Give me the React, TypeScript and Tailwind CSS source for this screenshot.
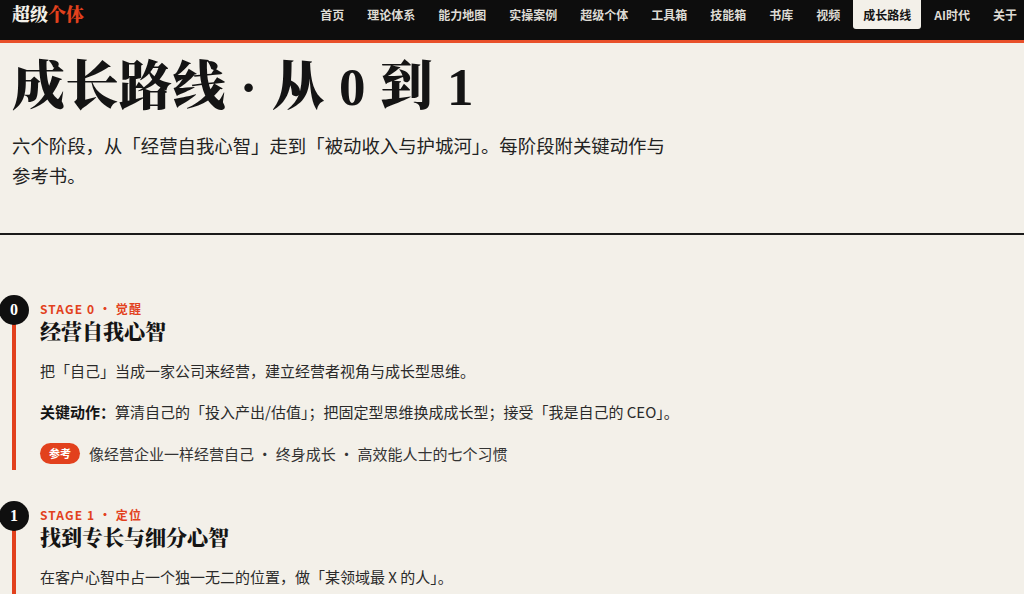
import React from 'react';

const NAV = ['首页', '理论体系', '能力地图', '实操案例', '超级个体', '工具箱', '技能箱', '书库', '视频', '成长路线', 'AI时代', '关于'];

const SERIF = "font-['Liberation_Serif','Noto_Serif_CJK_SC','Noto_Sans_CJK_SC',serif]";

interface Stage {
  no: number;
  tag: string;
  title: string;
  desc: string;
  action?: string;
  books?: string[];
}

const STAGES: Stage[] = [
  {
    no: 0,
    tag: '觉醒',
    title: '经营自我心智',
    desc: '把「自己」当成一家公司来经营，建立经营者视角与成长型思维。',
    action: '算清自己的「投入产出/估值」；把固定型思维换成成长型；接受「我是自己的 CEO」。',
    books: ['像经营企业一样经营自己', '终身成长', '高效能人士的七个习惯'],
  },
  {
    no: 1,
    tag: '定位',
    title: '找到专长与细分心智',
    desc: '在客户心智中占一个独一无二的位置，做「某领域最 X 的人」。',
    action: '列出三项可被付费的能力；选一个足够窄的细分赛道；写下一句话定位。',
    books: ['定位', '细分之王', '专长'],
  },
];

function StageItem({ s }: { s: Stage }) {
  return (
    <div className="relative border-l-4 border-[#e2411d] pl-6 pb-1">
      {/* 阶段序号圆点，压在竖线上 */}
      <div className={`absolute left-[-17px] top-[-5px] w-[30px] h-[30px] rounded-full bg-[#0f0f0f] text-white flex items-center justify-center text-[16px] font-bold ${SERIF}`}>
        {s.no}
      </div>
      <div className="text-[12px] leading-[18px] font-bold tracking-[0.09em] text-[#e2411d]">
        STAGE {s.no} · {s.tag}
      </div>
      <h3 className={`text-[21px] leading-[28px] font-black text-[#141414] ${SERIF}`}>{s.title}</h3>
      <p className="mt-3 text-[15px] leading-[25px] text-[#2a2a2a]">{s.desc}</p>
      {s.action && (
        <p className="mt-4 text-[15px] leading-[25px] text-[#2a2a2a]">
          <span className="font-bold text-[#141414]">关键动作：</span>
          {s.action}
        </p>
      )}
      {s.books && (
        <div className="mt-4 flex items-center gap-[9px] h-[26px]">
          <span className="inline-flex items-center justify-center w-[40px] h-[21px] rounded-full bg-[#e2411d] text-white text-[11px] leading-none font-bold">参考</span>
          <span className="text-[15px] leading-[25px] text-[#333]">{s.books.join(' · ')}</span>
        </div>
      )}
    </div>
  );
}

export default function App() {
  return (
    <div className="min-h-screen w-full overflow-hidden bg-[#f3f0e9] text-[#141414] font-['Noto_Sans_CJK_SC','Noto_Sans',sans-serif]">
      {/* 顶部导航 */}
      <header className="h-[43px] bg-[#0d0d0d] border-b-[3px] border-[#e8502a] flex items-start px-3">
        <div className={`mt-[3px] text-[18px] leading-[24px] font-black ${SERIF}`}>
          <span className="text-[#f3f0e9]">超级</span>
          <span className="text-[#e2411d]">个体</span>
        </div>
        <nav className="ml-auto -mr-[15px] flex gap-[3px] shrink-0">
          {NAV.map((n) => (
            <a
              key={n}
              className={`h-[29px] px-[10px] flex items-center text-[12px] font-bold rounded-b-[3px] ${
                n === '成长路线' ? 'bg-[#f3f0e9] text-[#141414]' : 'text-[#dedbd4]'
              }`}
            >
              {n}
            </a>
          ))}
        </nav>
      </header>

      {/* 标题区 */}
      <section className="px-3 pt-[15px] pb-[43px] border-b-2 border-[#1a1a1a]">
        <h1 className={`text-[53px] leading-[58px] font-black tracking-[0.5px] ${SERIF}`}>成长路线 · 从 0 到 1</h1>
        <p className="mt-[14px] max-w-[668px] text-[18.4px] leading-[30px] text-[#222]">
          六个阶段，从「经营自我心智」走到「被动收入与护城河」。每阶段附关键动作与参考书。
        </p>
      </section>

      {/* 阶段时间线 */}
      <section className="px-3 pt-[65px] pb-10 flex flex-col gap-[36px]">
        {STAGES.map((s) => (
          <StageItem key={s.no} s={s} />
        ))}
      </section>
    </div>
  );
}
